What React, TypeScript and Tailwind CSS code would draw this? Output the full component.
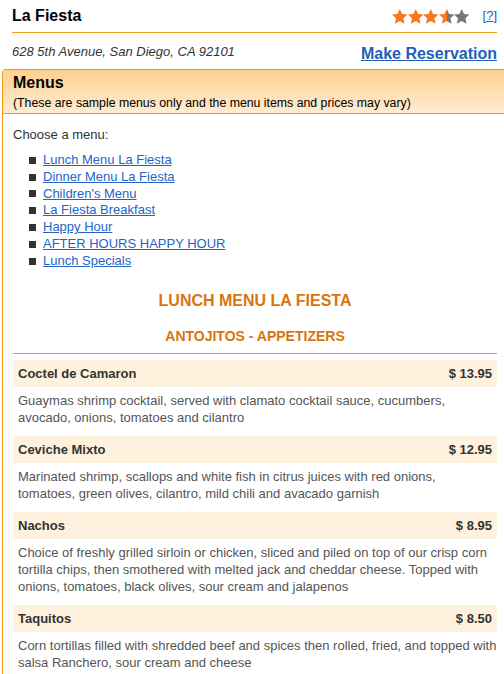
import React from "react";

const STAR = "M8 0 L10.4 5.2 L16 5.8 L11.8 9.6 L13 15.2 L8 12.4 L3 15.2 L4.2 9.6 L0 5.8 L5.6 5.2 Z";

const Star = ({ fill, id }: { fill: "full" | "half" | "empty"; id: string }) => {
  const orange = "#f7781e";
  const gray = "#777777";
  return (
    <svg width="15.5" height="15" viewBox="0 0 16 15.5">
      {fill === "half" && (
        <defs>
          <linearGradient id={id} x1="0" x2="1" y1="0" y2="0">
            <stop offset="50%" stopColor={orange} />
            <stop offset="50%" stopColor={gray} />
          </linearGradient>
        </defs>
      )}
      <path
        d={STAR}
        fill={fill === "half" ? `url(#${id})` : fill === "full" ? orange : gray}
      />
    </svg>
  );
};

const links = [
  "Lunch Menu La Fiesta",
  "Dinner Menu La Fiesta",
  "Children's Menu",
  "La Fiesta Breakfast",
  "Happy Hour",
  "AFTER HOURS HAPPY HOUR",
  "Lunch Specials",
];

const items = [
  {
    name: "Coctel de Camaron",
    price: "$ 13.95",
    lines: [
      "Guaymas shrimp cocktail, served with clamato cocktail sauce, cucumbers,",
      "avocado, onions, tomatoes and cilantro",
    ],
  },
  {
    name: "Ceviche Mixto",
    price: "$ 12.95",
    lines: [
      "Marinated shrimp, scallops and white fish in citrus juices with red onions,",
      "tomatoes, green olives, cilantro, mild chili and avacado garnish",
    ],
  },
  {
    name: "Nachos",
    price: "$ 8.95",
    lines: [
      "Choice of freshly grilled sirloin or chicken, sliced and piled on top of our crisp corn",
      "tortilla chips, then smothered with melted jack and cheddar cheese. Topped with",
      "onions, tomatoes, black olives, sour cream and jalapenos",
    ],
  },
  {
    name: "Taquitos",
    price: "$ 8.50",
    lines: [
      "Corn tortillas filled with shredded beef and spices then rolled, fried, and topped with",
      "salsa Ranchero, sour cream and cheese",
    ],
  },
];

export default function App() {
  return (
    <div
      className="w-[504px] h-[674px] overflow-hidden bg-white"
      style={{ fontFamily: '"Liberation Sans", Arial, sans-serif' }}
    >
      <div className="pl-[12px] pr-[7px]">
        <div className="flex items-center justify-between h-[33px] border-b border-[#f39a1e]">
          <div className="text-[16px] font-bold text-black leading-[20px]">La Fiesta</div>
          <div className="flex items-center">
            <div className="flex items-center pr-[13px]">
              <Star fill="full" id="s1" />
              <Star fill="full" id="s2" />
              <Star fill="full" id="s3" />
              <Star fill="half" id="s4" />
              <Star fill="empty" id="s5" />
            </div>
            <span className="text-[13px] text-[#1f5fb5] leading-[16px]">
              [<span className="underline">?</span>]
            </span>
          </div>
        </div>
        <div className="flex items-center justify-between h-[36px] pt-[2px]">
          <div className="text-[13px] italic text-[#333]">628 5th Avenue, San Diego, CA 92101</div>
          <a href="#" className="text-[16px] font-bold text-[#1f5fb5] underline pt-[3px]">
            Make Reservation
          </a>
        </div>
      </div>

      <div className="ml-[2px] border-l border-t border-[#f39a1e] rounded-tl-[4px]">
        <div className="h-[44px] border-b border-[#f39a1e] bg-gradient-to-b from-[#ffd08e] to-[#feecd2] pl-[10px] pt-[3px]">
          <div className="text-[16px] font-bold text-black leading-[20px]">Menus</div>
          <div className="text-[12.3px] text-black leading-[16px] mt-[2px]">
            (These are sample menus only and the menu items and prices may vary)
          </div>
        </div>

        <div className="pl-[10px] pr-[7px] pt-[12px]">
          <div className="text-[13px] text-[#333] leading-[17px]">Choose a menu:</div>
          <ul className="mt-[9px] pl-[16px]">
            {links.map((l) => (
              <li key={l} className="flex items-center text-[13px] leading-[16.8px]">
                <span className="w-[7px] h-[7px] bg-[#333] mr-[7px] inline-block" />
                <a href="#" className="text-[#1f64c8] underline">
                  {l}
                </a>
              </li>
            ))}
          </ul>

          <div className="mt-[21px] text-center text-[16px] font-bold text-[#d9750f] leading-[20px]">
            LUNCH MENU LA FIESTA
          </div>
          <div className="mt-[16px] pb-[8px] text-center text-[14px] font-bold text-[#d9750f] leading-[18px]">
            ANTOJITOS - APPETIZERS
          </div>
          <div className="h-[1px] bg-[#f39a1e]" />

          <div className="mt-[6px]">
            {items.map((it) => (
              <div key={it.name}>
                <div className="flex justify-between bg-[#fef1dd] px-[5px] py-[5px] text-[13px] font-bold text-[#333] leading-[17px]">
                  <span>{it.name}</span>
                  <span>{it.price}</span>
                </div>
                <div className="pl-[5px] mr-[-7px] pt-[5px] pb-[10px] text-[13px] text-[#555] leading-[17px] whitespace-nowrap">
                  {it.lines.map((ln) => (
                    <div key={ln}>{ln}</div>
                  ))}
                </div>
              </div>
            ))}
          </div>
        </div>
      </div>
    </div>
  );
}
